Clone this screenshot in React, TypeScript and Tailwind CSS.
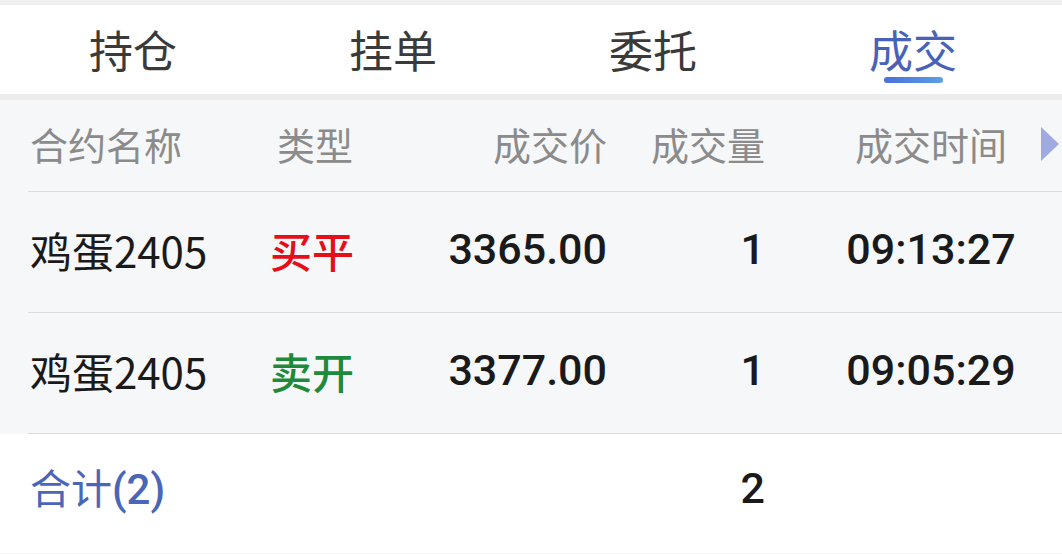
import React from "react";

const cjk = { fontFamily: '"Noto Sans CJK SC", "Noto Sans", sans-serif' };
const num = { fontFamily: 'Roboto, "Noto Sans CJK SC", sans-serif' };

type Row = { name: string; type: string; buy: boolean; price: string; vol: string; time: string };

const rows: Row[] = [
  { name: "鸡蛋2405", type: "买平", buy: true, price: "3365.00", vol: "1", time: "09:13:27" },
  { name: "鸡蛋2405", type: "卖开", buy: false, price: "3377.00", vol: "1", time: "09:05:29" },
];

const tabs = ["持仓", "挂单", "委托", "成交"];

export default function App() {
  return (
    <div className="w-[1062px] h-[554px] bg-white overflow-hidden flex flex-col" style={cjk}>
      <div className="h-[5px] bg-[#efefef]" />
      <div className="h-[89px] flex pl-[3px] bg-white">
        {tabs.map((t, i) => {
          const active = i === 3;
          return (
            <div key={t} className="w-[260px] flex flex-col items-center pt-[20px]">
              <div
                className={`text-[44px] leading-[48px] ${active ? "text-[#4862b8]" : "text-[#3a3a3a]"}`}
              >
                {t}
              </div>
              {active && (
                <div className="mt-[4px] w-[59px] h-[6px] rounded-full bg-gradient-to-r from-[#4a70d8] to-[#5b9fe6]" />
              )}
            </div>
          );
        })}
      </div>
      <div className="h-[6px] bg-[#ececec]" />
      <div className="bg-[#f6f7f9]">
        <div className="h-[91px] flex items-center text-[38px] text-[#8b8b8b] pb-[4px]">
          <div className="w-[270px] shrink-0 pl-[30px]">合约名称</div>
          <div className="w-[176px] shrink-0 pl-[7px]">类型</div>
          <div className="w-[161px] shrink-0 text-right">成交价</div>
          <div className="w-[158px] shrink-0 text-right">成交量</div>
          <div className="w-[66px] shrink-0" />
          <div className="w-[200px] shrink-0 text-center">成交时间</div>
          <div className="ml-[10px] w-0 h-0 border-y-[17px] border-y-transparent border-l-[18px] border-l-[#9eaae0]" />
        </div>
        {rows.map((r, i) => (
          <div key={i}>
            <div className="ml-[28px] h-[1px] bg-[#dcdcdc]" />
            <div className="h-[120px] flex items-center text-[#1a1a1a] pb-[5px]">
              <div className="w-[270px] shrink-0 pl-[30px] text-[42px]">{r.name}</div>
              <div
                className={`w-[176px] shrink-0 text-[42px] font-medium ${r.buy ? "text-[#e50e19]" : "text-[#1e8a3b]"}`}
              >
                {r.type}
              </div>
              <div className="w-[161px] shrink-0 text-right text-[43px] font-medium" style={num}>
                {r.price}
              </div>
              <div className="w-[158px] shrink-0 text-right text-[43px] font-medium" style={num}>
                {r.vol}
              </div>
              <div className="w-[66px] shrink-0" />
              <div className="w-[200px] shrink-0 text-center text-[43px] font-medium" style={num}>
                {r.time}
              </div>
            </div>
          </div>
        ))}
        <div className="ml-[28px] h-[1px] bg-[#dcdcdc]" />
      </div>
      <div className="h-[112px] flex items-center bg-white pb-[4px]">
        <div className="w-[270px] shrink-0 pl-[30px] text-[41px] text-[#4a66b8]">
          合计<span className="font-medium text-[42px]" style={num}>(2)</span>
        </div>
        <div className="w-[176px] shrink-0" />
        <div className="w-[161px] shrink-0" />
        <div className="w-[158px] shrink-0 text-right text-[43px] font-medium text-[#1a1a1a]" style={num}>
          2
        </div>
      </div>
      <div className="flex-1" />
      <div className="h-[1px] bg-[#f2f2f2]" />
    </div>
  );
}
